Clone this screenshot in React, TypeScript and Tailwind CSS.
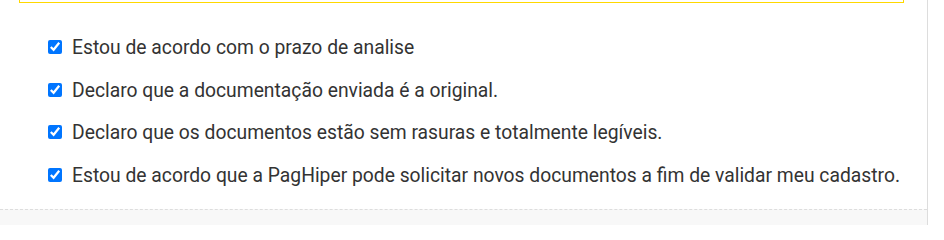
import React from "react"

const ITEMS = [
  "Estou de acordo com o prazo de analise",
  "Declaro que a documentação enviada é a original.",
  "Declaro que os documentos estão sem rasuras e totalmente legíveis.",
  "Estou de acordo que a PagHiper pode solicitar novos documentos a fim de validar meu cadastro.",
]

export default function App() {
  return (
    <div className="flex w-[944px] h-[225px] bg-white overflow-hidden" style={{ fontFamily: "Roboto, 'Liberation Sans', sans-serif" }}>
      <div className="w-[928px] flex flex-col border-r border-[#dddddd]">
        <div className="ml-[19px] w-[885px] h-[3px] border-x border-b border-[#ffd800]" />
        <ul className="flex flex-col gap-[18.5px] pt-[33px] pb-[21px] pl-[48px]">
          {ITEMS.map((text) => (
            <li key={text} className="flex items-center gap-[10px] h-[24px]">
              <input type="checkbox" checked readOnly className="m-0 -mt-[2px] w-[14px] h-[14px]" />
              <span className="text-[19.3px] leading-[24px] text-[#333333]">{text}</span>
            </li>
          ))}
        </ul>
        <div className="flex-1 border-t border-dashed border-[#dddddd] bg-[#f8f8f8]" />
      </div>
      <div className="flex-1 bg-white" />
    </div>
  )
}
